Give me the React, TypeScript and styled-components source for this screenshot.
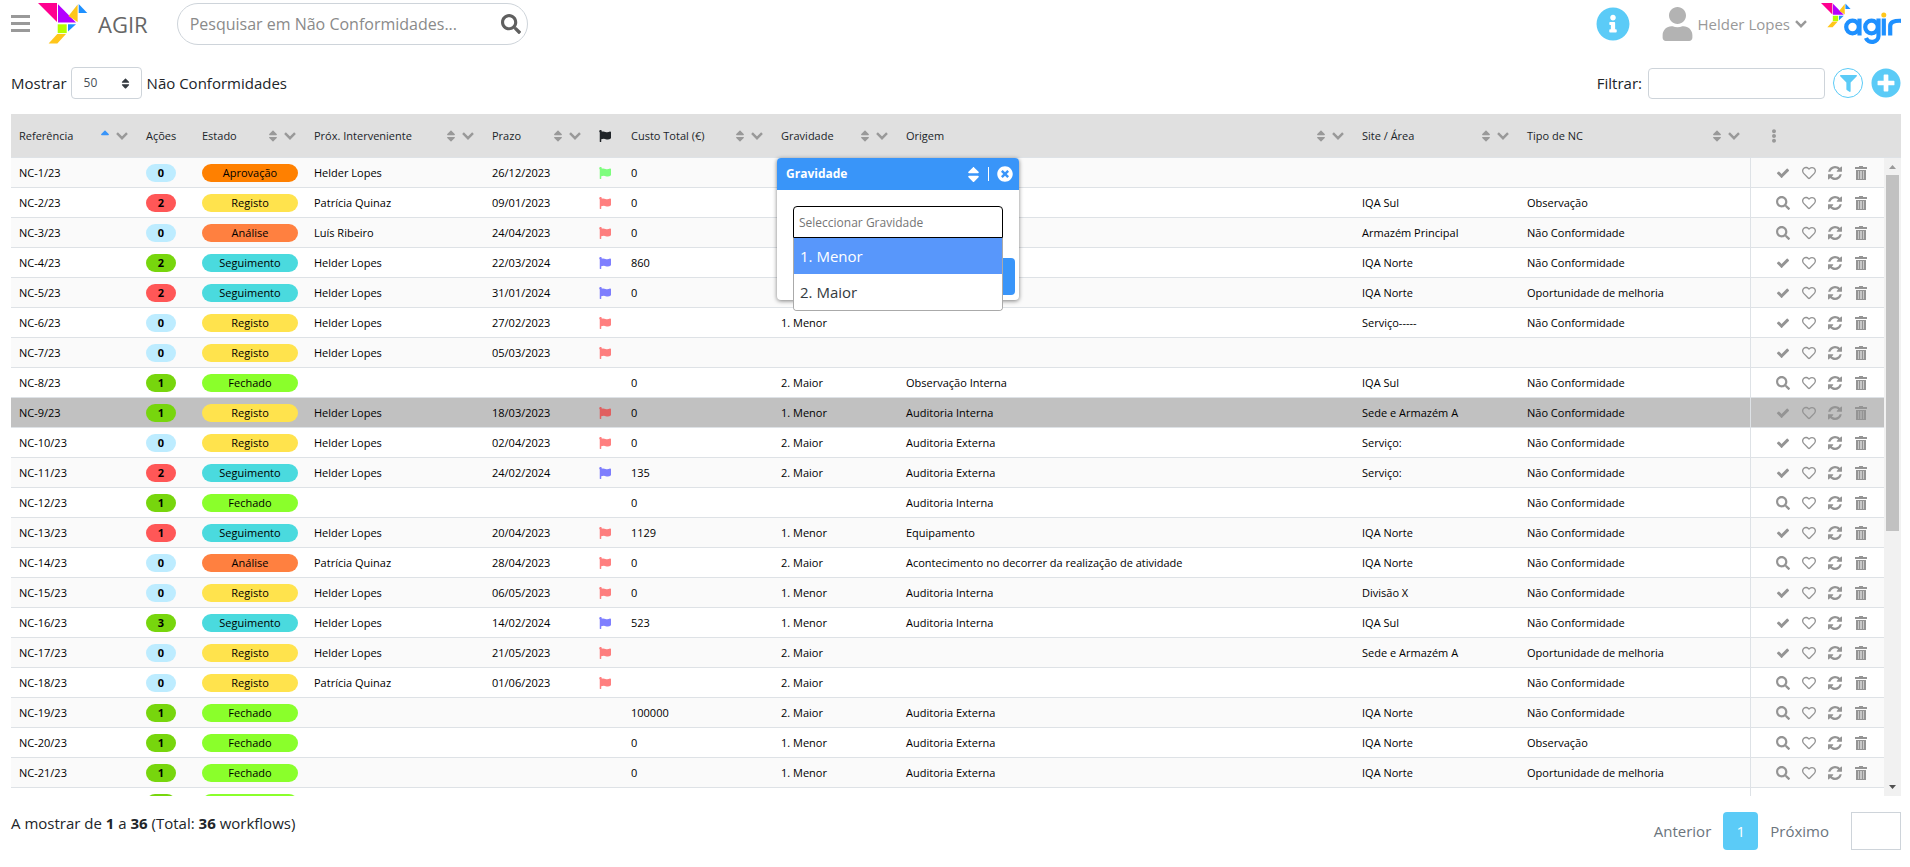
import React from "react";
import styled, { createGlobalStyle, css } from "styled-components";
import {
  FaSearch, FaInfoCircle, FaUser, FaSort, FaSortUp, FaFlag, FaRegHeart,
  FaFilter, FaPlusCircle, FaTimesCircle, FaEllipsisV,
} from "react-icons/fa";

const GlobalStyle = createGlobalStyle`
  *, *::before, *::after { box-sizing: border-box; }
  body {
    margin: 0;
    background: #fff;
    color: #212529;
    font-family: "Open Sans", "Noto Sans", sans-serif;
    font-size: 15px;
    line-height: 24px;
  }
  button, input, select { font: inherit; color: inherit; }
  svg { display: block; }
`;

const Page = styled.div`
  display: flex;
  flex-direction: column;
  height: 100vh;
  min-height: 400px;
  padding: 0 9px 0 11px;
`;

const PlainButton = styled.button`
  display: flex;
  align-items: center;
  justify-content: center;
  padding: 0;
  border: 0;
  background: none;
  color: inherit;
`;

const TopBar = styled.header`
  display: flex;
  align-items: flex-start;
  justify-content: space-between;
  height: 67px;
  padding-top: 3px;
`;

const TopGroup = styled.div`
  display: flex;
  align-items: center;
  height: 42px;
`;

const MenuButton = styled(PlainButton)`
  color: #999;
  margin-right: 8px;
`;

const AppName = styled.h1`
  margin: 0 29px 0 10px;
  font-size: 22px;
  line-height: 30px;
  font-weight: 400;
  color: #666;
`;

const SearchBox = styled.form`
  display: flex;
  align-items: center;
  width: 351px;
  height: 42px;
  padding: 0 6px 0 12px;
  border: 1px solid #ced4da;
  border-radius: 21px;
`;

const SearchInput = styled.input`
  flex: 1;
  min-width: 0;
  padding: 0;
  border: 0;
  outline: 0;
  background: none;
  font-size: 16px;
  &::placeholder { color: #8a8a8a; opacity: 1; }
`;

const SearchButton = styled(PlainButton)`
  color: #5f5f5f;
  font-size: 20px;
`;

const InfoButton = styled(PlainButton)`
  color: #5bcbf7;
  font-size: 34px;
  margin-right: 32px;
`;

const UserButton = styled(PlainButton)`
  gap: 5px;
  margin-right: 14px;
  color: #999;
`;

const UserIcon = styled.span`
  color: #b3b3b3;
  font-size: 34px;
  > svg { width: 31px; }
`;

const Controls = styled.div`
  display: flex;
  justify-content: space-between;
  height: 47px;
`;

const ControlGroup = styled.label`
  display: flex;
  align-items: center;
  height: 32px;
`;

const SelectWrap = styled.span`
  display: grid;
  align-items: center;
  width: 71px;
  margin: 0 5px 0 4px;
  > * { grid-area: 1 / 1; }
  > svg { justify-self: end; margin-right: 10px; pointer-events: none; color: #343a40; }
`;

const PageSize = styled.select`
  appearance: none;
  height: 32px;
  padding: 0 12px;
  border: 1px solid #ced4da;
  border-radius: 4px;
  background: #fff;
  color: #495057;
  font-size: 12px;
`;

const FilterRow = styled.div`
  display: flex;
  align-items: center;
  gap: 8px;
  height: 32px;
`;

const FilterInput = styled.input`
  width: 177px;
  height: 31px;
  margin-left: 6px;
  border: 1px solid #ced4da;
  border-radius: 4px;
`;

const RoundButton = styled(PlainButton)<{ $outlined?: boolean }>`
  width: 30px;
  height: 30px;
  border-radius: 50%;
  color: #5bcbf7;
  font-size: 30px;
  ${(p) => p.$outlined && css`
    border: 1px solid #5bcbf7;
    font-size: 17px;
  `}
`;

const TableFrame = styled.div`
  flex: 1;
  min-height: 0;
  display: grid;
  grid-template-columns: 1fr 17px;
`;

const Table = styled.table`
  display: flex;
  flex-direction: column;
  min-height: 0;
  min-width: 0;
  font-size: 11px;
  line-height: 16px;
`;

const rowGrid = css`
  display: grid;
  grid-template-columns: 127px 56px 112px 178px 107px 32px 150px 125px 1fr 165px 231px 134px;
`;

const Head = styled.thead`
  display: block;
  flex: none;
  height: 44px;
  background: #e0e0e0;
  border-bottom: 1px solid #dee2e6;
`;

const HeadRow = styled.tr`
  ${rowGrid}
`;

const HeadCell = styled.th`
  display: flex;
  align-items: center;
  justify-content: space-between;
  position: relative;
  height: 44px;
  padding: 0 10px 0 8px;
  font-weight: 400;
  text-align: left;
  white-space: nowrap;
`;

const MenuHeadCell = styled(HeadCell)`
  padding-left: 17px;
`;

const HeadTools = styled.span`
  display: flex;
  align-items: center;
  gap: 4px;
  color: #999;
`;

const SortButton = styled(PlainButton)<{ $active?: boolean }>`
  color: ${(p) => (p.$active ? "#3995f9" : "#999")};
  font-size: 14px;
`;

const Body = styled.tbody`
  display: block;
  flex: 1;
  min-height: 0;
  overflow: hidden;
  color: #000;
`;

const Row = styled.tr<{ $hovered?: boolean }>`
  ${rowGrid}
  height: 30px;
  background: #fff;
  &:nth-child(odd) { background: #fafafa; }
  ${(p) => p.$hovered && css`&&& { background: #c1c1c1; }`}
`;

const Cell = styled.td`
  display: flex;
  align-items: center;
  padding: 0 0 0 8px;
  border-bottom: 1px solid #dee2e6;
  white-space: nowrap;
`;

const ActionsCell = styled(Cell)`
  gap: 12px;
  padding-left: 25px;
  border-left: 1px solid #dee2e6;
`;

const ActionButton = styled(PlainButton)`
  width: 14px;
  height: 14px;
  color: #949494;
  font-size: 14px;
`;

const Pill = styled.span<{ $color: string; $count?: boolean }>`
  width: ${(p) => (p.$count ? "30px" : "96px")};
  height: 18px;
  border-radius: 9px;
  line-height: 18px;
  text-align: center;
  background: ${(p) => p.$color};
  font-weight: ${(p) => (p.$count ? 700 : 400)};
`;

const FlagMark = styled.span<{ $color: string }>`
  color: ${(p) => p.$color};
  font-size: 12px;
`;

const ScrollColumn = styled.div`
  display: flex;
  flex-direction: column;
  min-height: 0;
`;

const ScrollCorner = styled.div`
  flex: none;
  height: 44px;
  background: #e0e0e0;
  border-bottom: 1px solid #dee2e6;
`;

const ScrollTrack = styled.div`
  flex: 1;
  min-height: 0;
  display: flex;
  flex-direction: column;
  align-items: center;
  background: #f1f1f1;
`;

const ScrollLane = styled.div`
  flex: 1;
  min-height: 0;
  width: 13px;
`;

const ScrollThumb = styled.div`
  height: 59%;
  background: #c1c1c1;
`;

const Popup = styled.div`
  position: absolute;
  top: 44px;
  left: 4px;
  z-index: 2;
  width: 242px;
  height: 142px;
  border-radius: 4px;
  background: #fff;
  box-shadow: 0 1px 4px rgba(0, 0, 0, 0.5);
  font-size: 12px;
`;

const PopupHead = styled.div`
  display: flex;
  align-items: center;
  height: 32px;
  padding: 0 6px 0 9px;
  border-radius: 4px 4px 0 0;
  background: #3995f9;
  color: #fff;
  font-weight: 700;
`;

const PopupTitle = styled.span`
  flex: 1;
`;

const PopupDivider = styled.span`
  width: 1px;
  height: 14px;
  margin: 0 8px 0 5px;
  background: #fff;
`;

const PopupContent = styled.div`
  display: flex;
  flex-direction: column;
  padding: 16px 16px 0;
`;

const PopupInput = styled.input`
  height: 32px;
  padding: 0 5px;
  border: 1px solid #000;
  border-radius: 4px 4px 0 0;
  outline: 0;
  background: #fff;
  &::placeholder { color: #757575; opacity: 1; }
`;

const Options = styled.ul`
  position: relative;
  z-index: 1;
  margin: 0;
  padding: 0;
  overflow: hidden;
  list-style: none;
  border: 1px solid #aaa;
  border-top: 0;
  border-radius: 0 0 4px 4px;
  background: #fff;
  font-size: 15px;
`;

const Option = styled.li<{ $active?: boolean }>`
  height: 36px;
  padding: 0 6px;
  line-height: 36px;
  color: ${(p) => (p.$active ? "#fff" : "#343a40")};
  background: ${(p) => (p.$active ? "#5897fb" : "#fff")};
`;

const ApplyButton = styled.button`
  position: absolute;
  right: 4px;
  bottom: 5px;
  width: 64px;
  height: 37px;
  border: 0;
  border-radius: 4px;
  background: #3995f9;
`;

const Footer = styled.footer`
  display: flex;
  align-items: flex-start;
  justify-content: space-between;
  height: 71px;
`;

const Summary = styled.p`
  margin: 15px 0 0;
`;

const Pager = styled.nav`
  display: flex;
  align-items: center;
  height: 38px;
  margin-top: 16px;
  gap: 12px;
  color: #6c757d;
`;

const PagerButton = styled(PlainButton)`
  height: 38px;
`;

const CurrentPage = styled(PagerButton)`
  width: 35px;
  border-radius: 4px;
  background: #5bcbf7;
  color: #fff;
`;

const PageInput = styled.input`
  width: 50px;
  height: 38px;
  margin-left: 10px;
  border: 1px solid #ced4da;
`;

const birdShapes = (
  <>
    <path d="M0 0h19v19z" fill="#ff0090" />
    <path d="M20 1.300v18.300h18z" fill="#b400ff" />
    <path d="M39.600 1.500v17.500L30.500 13z" fill="#ffc61a" />
    <path d="M40.700 1v9h8.600z" fill="#1e90ff" />
    <path d="M19.700 21.300h9v8.800h-9z" fill="#b4ff00" />
    <path d="M30 21.300h8l-8 7.300z" fill="#1e90ff" />
    <path d="M19.300 31H28l-8.700 9.400h-8.700z" fill="#ffc61a" />
  </>
);

const Bird = () => (
  <svg width="50" height="42" viewBox="0 0 50 42" aria-hidden="true">{birdShapes}</svg>
);

const AgirLogo = () => (
  <svg width="80" height="42" viewBox="0 0 80 42" role="img" aria-label="agir">
    <g transform="scale(0.6)">{birdShapes}</g>
    <g fill="none" stroke="#1e90ff" strokeWidth="4.2">
      <circle cx="31.500" cy="24" r="6.300" />
      <path d="M38.500 15.600v16.900" />
      <circle cx="50.500" cy="24" r="6.300" />
      <path d="M57.500 15.600v17.400a6.500 6 0 0 1-12.600 2" />
      <path d="M62.800 15.600v16.900M69.200 32.500V23q0-5.600 10.800-5.200" />
    </g>
    <circle cx="62.800" cy="12" r="2.500" fill="#ffc61a" />
  </svg>
);

const MenuIcon = () => (
  <svg width="19" height="20" viewBox="0 0 19 20" fill="#999" aria-hidden="true">
    <path d="M0 1h19v3H0zM0 8h19v3H0zM0 15h19v3H0z" />
  </svg>
);

const ChevronIcon = () => (
  <svg width="12" height="12" viewBox="0 0 12 12" fill="none" stroke="currentColor" strokeWidth="2.4" aria-hidden="true">
    <path d="M1 3.200l5 5 5-5" />
  </svg>
);

const CheckIcon = () => (
  <svg width="16" height="16" viewBox="0 0 1792 1792" fill="currentColor" aria-hidden="true">
    <path d="M1671 566q0 40-28 68l-724 724-136 136q-28 28-68 28t-68-28l-136-136-362-362q-28-28-28-68t28-68l136-136q28-28 68-28t68 28l294 295 656-657q28-28 68-28t68 28l136 136q28 28 28 68z" />
  </svg>
);

const RefreshIcon = () => (
  <svg width="14" height="14" viewBox="0 0 1536 1536" fill="currentColor" aria-hidden="true">
    <path d="M1511 928q0 5-1 7-64 268-268 434.500T764 1536q-146 0-282.500-55T238 1324l-129 129q-19 19-45 19t-45-19-19-45V960q0-26 19-45t45-19h448q26 0 45 19t19 45-19 45l-137 137q71 66 161 102t187 36q134 0 250-65t186-179q11-17 53-117 8-23 30-23h192q13 0 22.500 9.500t9.500 22.500zm25-800v448q0 26-19 45t-45 19h-448q-26 0-45-19t-19-45 19-45l138-138Q969 256 768 256q-134 0-250 65T332 500q-11 17-53 117-8 23-30 23H50q-13 0-22.500-9.500T18 608v-7q65-268 270-434.500T768 0q146 0 284 55.500T1297 212l130-129q19-19 45-19t45 19 19 45z" />
  </svg>
);

const TrashIcon = () => (
  <svg width="14" height="14" viewBox="0 0 14 14" fill="currentColor" aria-hidden="true">
    <path d="M5 0h4v1h4v2H1V1h4z" />
    <path d="M2 4h10v10H2z" opacity="0.5" />
    <path d="M2 4h10v1H2zM2 13h10v1H2zM2 4h2v10H2zM5 4h1v10H5zM8 4h1v10H8zM10 4h2v10h-2z" />
  </svg>
);

const ArrowIcon = ({ up }: { up?: boolean }) => (
  <svg width="17" height="17" viewBox="0 0 17 17" fill={up ? "#999" : "#505050"} aria-hidden="true">
    <path d={up ? "M5 11h7l-3.500-4z" : "M5 6h7l-3.500 4z"} />
  </svg>
);

type Column = { label: string; tools?: boolean; sorted?: boolean };

const columns: Column[] = [
  { label: "Referência", tools: true, sorted: true },
  { label: "Ações" },
  { label: "Estado", tools: true },
  { label: "Próx. Interveniente", tools: true },
  { label: "Prazo", tools: true },
  { label: "flag" },
  { label: "Custo Total (€)", tools: true },
  { label: "Gravidade", tools: true },
  { label: "Origem", tools: true },
  { label: "Site / Área", tools: true },
  { label: "Tipo de NC", tools: true },
  { label: "menu" },
];

const stateColors: Record<string, string> = {
  "Aprovação": "#ff8000",
  "Registo": "#ffe34d",
  "Análise": "#ff8040",
  "Seguimento": "#4adade",
  "Fechado": "#8aff2b",
};
const countColors: Record<string, string> = { b: "#bdecff", r: "#ff5757", g: "#77d60d" };
const flagColors: Record<string, string> = {
  g: "rgba(0,255,0,.5)", r: "rgba(255,0,0,.5)", b: "rgba(0,0,255,.5)",
};

const NC = "Não Conformidade";
const HL = "Helder Lopes";
const PQ = "Patrícia Quinaz";
const OM = "Oportunidade de melhoria";
const AI = "Auditoria Interna";
const AE = "Auditoria Externa";

// count, count colour, state, person, due date, flag, cost, severity, origin, site, type, editable
type Workflow = [number, string, string, string, string, string, string, string, string, string, string, boolean];

const workflows: Workflow[] = [
  [0, "b", "Aprovação", HL, "26/12/2023", "g", "0", "", "", "", "", true],
  [2, "r", "Registo", PQ, "09/01/2023", "r", "0", "", "", "IQA Sul", "Observação", false],
  [0, "b", "Análise", "Luís Ribeiro", "24/04/2023", "r", "0", "", "", "Armazém Principal", NC, false],
  [2, "g", "Seguimento", HL, "22/03/2024", "b", "860", "", "", "IQA Norte", NC, true],
  [2, "r", "Seguimento", HL, "31/01/2024", "b", "0", "", "", "IQA Norte", OM, true],
  [0, "b", "Registo", HL, "27/02/2023", "r", "", "1. Menor", "", "Serviço-----", NC, true],
  [0, "b", "Registo", HL, "05/03/2023", "r", "", "", "", "", "", true],
  [1, "g", "Fechado", "", "", "", "0", "2. Maior", "Observação Interna", "IQA Sul", NC, false],
  [1, "g", "Registo", HL, "18/03/2023", "r", "0", "1. Menor", AI, "Sede e Armazém A", NC, true],
  [0, "b", "Registo", HL, "02/04/2023", "r", "0", "2. Maior", AE, "Serviço:", NC, true],
  [2, "r", "Seguimento", HL, "24/02/2024", "b", "135", "2. Maior", AE, "Serviço:", NC, true],
  [1, "g", "Fechado", "", "", "", "0", "", AI, "", NC, false],
  [1, "r", "Seguimento", HL, "20/04/2023", "r", "1129", "1. Menor", "Equipamento", "IQA Norte", NC, true],
  [0, "b", "Análise", PQ, "28/04/2023", "r", "0", "2. Maior", "Acontecimento no decorrer da realização de atividade", "IQA Norte", NC, false],
  [0, "b", "Registo", HL, "06/05/2023", "r", "0", "1. Menor", AI, "Divisão X", NC, true],
  [3, "g", "Seguimento", HL, "14/02/2024", "b", "523", "1. Menor", AI, "IQA Sul", NC, true],
  [0, "b", "Registo", HL, "21/05/2023", "r", "", "2. Maior", "", "Sede e Armazém A", OM, true],
  [0, "b", "Registo", PQ, "01/06/2023", "r", "", "2. Maior", "", "", NC, false],
  [1, "g", "Fechado", "", "", "", "100000", "2. Maior", AE, "IQA Norte", NC, false],
  [1, "g", "Fechado", "", "", "", "0", "1. Menor", AE, "IQA Norte", "Observação", false],
  [1, "g", "Fechado", "", "", "", "0", "1. Menor", AE, "IQA Norte", OM, false],
  [1, "g", "Fechado", "", "", "", "", "", "", "", "", false],
];

const GravidadePopup = () => (
  <Popup>
    <PopupHead>
      <PopupTitle>Gravidade</PopupTitle>
      <PlainButton type="button" aria-label="Ordenar"><FaSort size={19} /></PlainButton>
      <PopupDivider />
      <PlainButton type="button" aria-label="Fechar"><FaTimesCircle size={16} /></PlainButton>
    </PopupHead>
    <PopupContent>
      <PopupInput placeholder="Seleccionar Gravidade" aria-label="Seleccionar Gravidade" />
      <Options role="listbox" aria-label="Gravidade">
        <Option role="option" aria-selected="true" $active>1. Menor</Option>
        <Option role="option" aria-selected="false">2. Maior</Option>
      </Options>
    </PopupContent>
    <ApplyButton type="button" aria-label="Filtrar" />
  </Popup>
);

const HeadContent = ({ column }: { column: Column }) => {
  if (column.label === "flag") return <FlagMark $color="#212529"><FaFlag /></FlagMark>;
  if (column.label === "menu") {
    return <SortButton type="button" aria-label="Menu"><FaEllipsisV /></SortButton>;
  }
  return (
    <>
      {column.label}
      {column.tools && (
        <HeadTools>
          <SortButton type="button" aria-label="Ordenar" $active={column.sorted}>
            {column.sorted ? <FaSortUp /> : <FaSort />}
          </SortButton>
          <PlainButton type="button" aria-label="Filtrar"><ChevronIcon /></PlainButton>
        </HeadTools>
      )}
    </>
  );
};

const WorkflowRow = ({ workflow, index }: { workflow: Workflow; index: number }) => {
  const [count, countColor, state, person, due, flag, cost, severity, origin, site, kind, editable] = workflow;
  return (
    <Row $hovered={index === 8}>
      <Cell>{index < 21 && `NC-${index + 1}/23`}</Cell>
      <Cell><Pill $count $color={countColors[countColor]}>{index < 21 && count}</Pill></Cell>
      <Cell><Pill $color={stateColors[state]}>{index < 21 && state}</Pill></Cell>
      <Cell>{person}</Cell>
      <Cell>{due}</Cell>
      <Cell>{flag && <FlagMark $color={flagColors[flag]}><FaFlag /></FlagMark>}</Cell>
      <Cell>{cost}</Cell>
      <Cell>{severity}</Cell>
      <Cell>{origin}</Cell>
      <Cell>{site}</Cell>
      <Cell>{kind}</Cell>
      <ActionsCell>
        <ActionButton type="button" aria-label="Abrir">{editable ? <CheckIcon /> : <FaSearch />}</ActionButton>
        <ActionButton type="button" aria-label="Favorito"><FaRegHeart /></ActionButton>
        <ActionButton type="button" aria-label="Atualizar"><RefreshIcon /></ActionButton>
        <ActionButton type="button" aria-label="Eliminar"><TrashIcon /></ActionButton>
      </ActionsCell>
    </Row>
  );
};

export default function App() {
  return (
    <Page>
      <GlobalStyle />
      <TopBar>
        <TopGroup>
          <MenuButton type="button" aria-label="Menu"><MenuIcon /></MenuButton>
          <Bird />
          <AppName>AGIR</AppName>
          <SearchBox role="search">
            <SearchInput type="text" placeholder="Pesquisar em Não Conformidades..." aria-label="Pesquisar" />
            <SearchButton type="button" aria-label="Pesquisar"><FaSearch /></SearchButton>
          </SearchBox>
        </TopGroup>
        <TopGroup>
          <InfoButton type="button" aria-label="Informação"><FaInfoCircle /></InfoButton>
          <UserButton type="button">
            <UserIcon><FaUser /></UserIcon>
            Helder Lopes
            <ChevronIcon />
          </UserButton>
          <AgirLogo />
        </TopGroup>
      </TopBar>

      <Controls>
        <ControlGroup>
          Mostrar
          <SelectWrap>
            <PageSize defaultValue="50"><option>50</option></PageSize>
            <FaSort size={13} />
          </SelectWrap>
          Não Conformidades
        </ControlGroup>
        <FilterRow>
          <ControlGroup>Filtrar:<FilterInput type="text" /></ControlGroup>
          <RoundButton type="button" aria-label="Filtrar" $outlined><FaFilter /></RoundButton>
          <RoundButton type="button" aria-label="Adicionar"><FaPlusCircle /></RoundButton>
        </FilterRow>
      </Controls>

      <TableFrame>
        <Table>
          <Head>
            <HeadRow>
              {columns.map((column) => {
                const Th = column.label === "menu" ? MenuHeadCell : HeadCell;
                return (
                  <Th key={column.label} scope="col">
                    <HeadContent column={column} />
                    {column.label === "Gravidade" && <GravidadePopup />}
                  </Th>
                );
              })}
            </HeadRow>
          </Head>
          <Body>
            {workflows.map((workflow, index) => (
              <WorkflowRow key={index} workflow={workflow} index={index} />
            ))}
          </Body>
        </Table>
        <ScrollColumn aria-hidden="true">
          <ScrollCorner />
          <ScrollTrack>
            <ArrowIcon up />
            <ScrollLane><ScrollThumb /></ScrollLane>
            <ArrowIcon />
          </ScrollTrack>
        </ScrollColumn>
      </TableFrame>

      <Footer>
        <Summary>A mostrar de <b>1</b> a <b>36</b> (Total: <b>36</b> workflows)</Summary>
        <Pager aria-label="Paginação">
          <PagerButton type="button">Anterior</PagerButton>
          <CurrentPage type="button">1</CurrentPage>
          <PagerButton type="button">Próximo</PagerButton>
          <PageInput type="text" aria-label="Página" />
        </Pager>
      </Footer>
    </Page>
  );
}
